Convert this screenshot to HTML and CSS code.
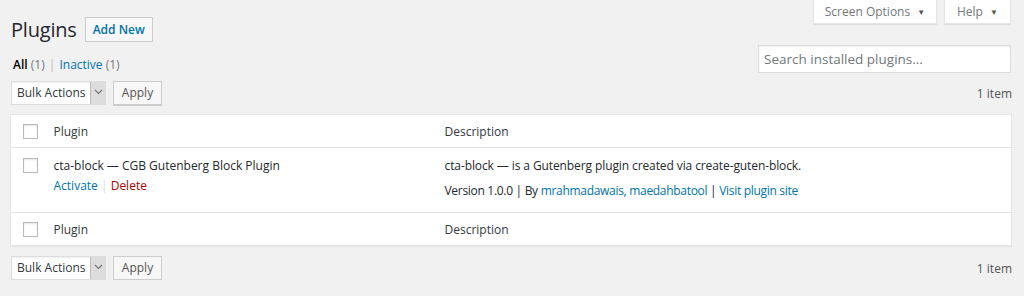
FILE: index.html
```html
<!DOCTYPE html>
<html lang="en">
<head>
    <meta charset="UTF-8">
    <meta name="viewport" content="width=device-width, initial-scale=1.0">
    <title>Plugins</title>
    <link rel="stylesheet" href="styles.css">
</head>
<body>
    <div class="wrap">
        <div class="head-row">
            <div class="title-row">
                <h1 class="title">Plugins</h1>
                <a class="add-new" href="#">Add New</a>
            </div>
            <div class="meta-links">
                <div class="meta-tab">Screen Options <span class="caret">&#9660;</span></div>
                <div class="meta-tab help">Help <span class="caret">&#9660;</span></div>
            </div>
        </div>

        <div class="filter-row">
            <ul class="subsubsub">
                <li><a class="current" href="#">All <span class="count">(1)</span></a> <span class="sep">|</span></li>
                <li><a href="#">Inactive <span class="count">(1)</span></a></li>
            </ul>
            <input class="search" type="search" placeholder="Search installed plugins...">
        </div>

        <div class="tablenav top">
            <div class="actions">
                <div class="select">
                    <span class="select-label">Bulk Actions</span>
                    <span class="select-arrow"><svg width="9" height="6" viewBox="0 0 9 6"><path d="M1 1l3.5 3.5L8 1" fill="none" stroke="#777" stroke-width="1.2"/></svg></span>
                </div>
                <div class="button">Apply</div>
            </div>
            <div class="count-items">1 item</div>
        </div>

        <table class="plugins">
            <colgroup>
                <col class="col-cb">
                <col class="col-name">
                <col>
            </colgroup>
            <thead>
                <tr>
                    <td class="check"><span class="cb"></span></td>
                    <th>Plugin</th>
                    <th>Description</th>
                </tr>
            </thead>
            <tbody>
                <tr>
                    <td class="check"><span class="cb"></span></td>
                    <td class="plugin-title">
                        <strong>cta-block — CGB Gutenberg Block Plugin</strong>
                        <div class="row-actions"><a href="#">Activate</a> <span class="sep">|</span> <a class="delete" href="#">Delete</a></div>
                    </td>
                    <td class="desc">
                        <p>cta-block — is a Gutenberg plugin created via create-guten-block.</p>
                        <div class="meta">Version 1.0.0 | By <a href="#">mrahmadawais, maedahbatool</a> | <a href="#">Visit plugin site</a></div>
                    </td>
                </tr>
            </tbody>
            <tfoot>
                <tr>
                    <td class="check"><span class="cb"></span></td>
                    <th>Plugin</th>
                    <th>Description</th>
                </tr>
            </tfoot>
        </table>

        <div class="tablenav bottom">
            <div class="actions">
                <div class="select">
                    <span class="select-label">Bulk Actions</span>
                    <span class="select-arrow"><svg width="9" height="6" viewBox="0 0 9 6"><path d="M1 1l3.5 3.5L8 1" fill="none" stroke="#777" stroke-width="1.2"/></svg></span>
                </div>
                <div class="button">Apply</div>
            </div>
            <div class="count-items">1 item</div>
        </div>
    </div>
</body>
</html>
```

FILE: styles.css
```css
*{
    box-sizing: border-box;
}
body{
    margin: 0;
    background-color: #f1f1f1;
    color: #444;
    font-family: "Open Sans", "Noto Sans", sans-serif;
    font-size: 12px;
}
a{
    color: #0073aa;
    text-decoration: none;
}
.wrap{
    padding: 0 12px 0 10px;
}

/* header */
.head-row{
    display: flex;
    justify-content: space-between;
    align-items: flex-start;
}
.title-row{
    display: flex;
    align-items: center;
    padding-top: 17px;
}
.title{
    margin: 0;
    font-size: 20px;
    font-weight: 400;
    color: #23282d;
    line-height: 25px;
    padding-left: 1px;
    letter-spacing: -0.2px;
}
.add-new{
    margin-left: 8px;
    height: 25px;
    line-height: 23px;
    padding: 0 7px;
    border: 1px solid #ccc;
    background-color: #f7f7f7;
    font-weight: 600;
    font-size: 12px;
}
.meta-links{
    display: flex;
    gap: 7px;
    margin-right: 1px;
}
.meta-tab{
    height: 24px;
    line-height: 23px;
    width: 124px;
    white-space: nowrap;
    text-align: center;
    background-color: #fff;
    color: #72777c;
    box-shadow: 0 1px 1px rgba(0,0,0,.08);
    border: 1px solid #e5e5e5;
    border-top: none;
}
.meta-tab.help{
    width: 67px;
}
.caret{
    font-size: 8px;
    color: #555;
    margin-left: 4px;
    vertical-align: 1px;
}

/* filters */
.filter-row{
    display: flex;
    justify-content: space-between;
    align-items: flex-end;
    margin-top: 3px;
}
.subsubsub{
    list-style: none;
    margin: 0;
    padding: 0 0 0 3px;
    display: flex;
    gap: 3px;
    font-size: 12px;
}
.subsubsub .current{
    color: #000;
    font-weight: 600;
}
.count{
    color: #72777c;
    font-weight: 400;
}
.subsubsub .sep{
    color: #bbb;
    margin: 0 1px;
}
.search{
    width: 253px;
    height: 28px;
    margin-right: 1px;
    border: 1px solid #ddd;
    box-shadow: inset 0 1px 2px rgba(0,0,0,.07);
    padding: 0 5px;
    font-family: inherit;
    font-size: 13.5px;
    outline: none;
}
.search::placeholder{
    color: #72777c;
}

/* tablenav */
.tablenav{
    display: flex;
    justify-content: space-between;
    align-items: center;
    height: 24px;
}
.tablenav.top{
    margin-top: 8px;
    margin-bottom: 9px;
}
.tablenav.bottom{
    margin-top: 10px;
}
.actions{
    display: flex;
    gap: 7px;
    padding-left: 1px;
}
.select{
    display: flex;
    height: 24px;
    width: 95px;
    border: 1px solid #ddd;
    background-color: #fff;
    box-shadow: inset 0 1px 2px rgba(0,0,0,.07);
}
.select-label{
    flex: 1;
    line-height: 22px;
    padding-left: 5px;
    color: #32373c;
}
.select-arrow{
    width: 15px;
    display: flex;
    align-items: flex-start;
    justify-content: center;
    padding-top: 7px;
    background-color: #ddd;
    border-left: 1px solid #bbb;
}
.button{
    height: 24px;
    width: 49px;
    line-height: 22px;
    text-align: center;
    color: #555;
    background-color: #f7f7f7;
    border: 1px solid #ccc;
    box-shadow: 0 1px 0 #ccc;
}
.count-items{
    color: #555;
}

/* table */
.plugins{
    width: 100%;
    border-collapse: collapse;
    table-layout: fixed;
    background-color: #fff;
    border: 1px solid #e5e5e5;
    box-shadow: 0 1px 1px rgba(0,0,0,.04);
}
.col-cb{
    width: 33px;
}
.col-name{
    width: 391px;
}
.plugins th{
    text-align: left;
    font-weight: 400;
    color: #32373c;
    padding: 0 10px;
    height: 33px;
}
.plugins thead tr{
    border-bottom: 1px solid #e1e1e1;
}
.plugins tfoot tr{
    border-top: 1px solid #e1e1e1;
}
.plugins td{
    vertical-align: top;
    padding: 0 10px;
}
.plugins td.check{
    padding: 0 0 0 12px;
    vertical-align: middle;
}
.plugins tbody td.check{
    vertical-align: top;
    padding-top: 10px;
}
.cb{
    display: block;
    width: 15px;
    height: 15px;
    border: 1px solid #b4b9be;
    box-shadow: inset 0 1px 2px rgba(0,0,0,.1);
    background-color: #fff;
}
.plugins tbody tr{
    height: 65px;
}
.plugin-title{
    padding-top: 8px !important;
}
.plugin-title strong{
    display: block;
    font-weight: 400;
    color: #23282d;
    line-height: 19px;
}
.row-actions{
    margin-top: 1px;
    line-height: 19px;
}
.row-actions .sep{
    margin: 0;
    color: #ddd;
}
.delete{
    color: #a00;
}
.desc{
    padding-top: 8px !important;
    color: #23282d;
}
.desc p{
    margin: 0;
    line-height: 19px;
    letter-spacing: -0.1px;
}
.desc .meta{
    margin-top: 6px;
    line-height: 19px;
    letter-spacing: -0.3px;
}
```
